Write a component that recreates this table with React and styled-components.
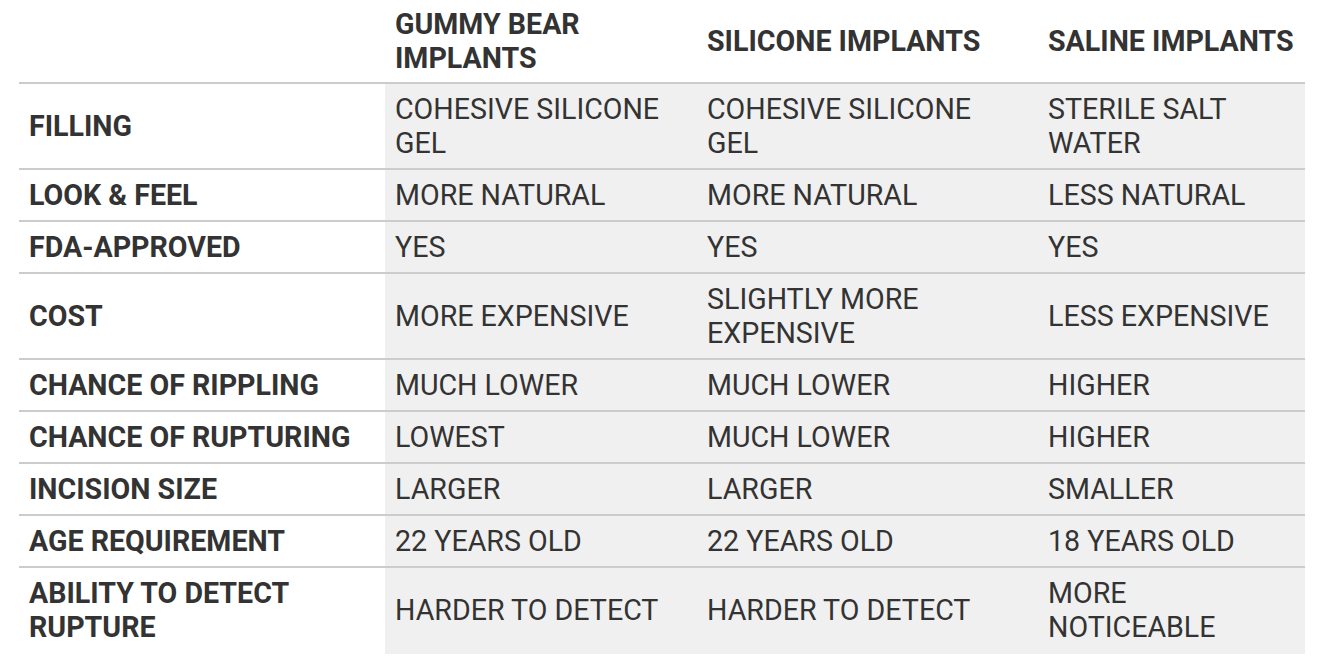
import React from "react"
import styled, { createGlobalStyle } from "styled-components"

const GlobalStyle = createGlobalStyle`
  html, body {
    margin: 0;
    padding: 0;
    background: #ffffff;
  }
  body {
    font-family: Roboto, "Liberation Sans", Arial, sans-serif;
    color: #333333;
  }
`

const Wrapper = styled.div`
  padding: 0 20px 0 19px;
`

const Table = styled.div`
  display: grid;
  grid-template-columns: 366px 312px 341px 267px;
  width: 1286px;
`

const Cell = styled.div`
  display: flex;
  align-items: center;
  padding: 8px 18px 8px 10px;
  font-size: 28.6px;
  line-height: 34px;
  text-transform: uppercase;
  border-bottom: 2px solid #cccccc;
  background: ${props => (props.$shaded ? "#f0f0f0" : "transparent")};
  font-weight: ${props => (props.$bold ? 700 : 400)};
  ${props => props.$last && "border-bottom-color: transparent;"}
`

const HeadCell = styled(Cell)`
  padding: 7px 8px 7px 10px;
  font-weight: 700;
  background: transparent;
`

const columns = ["", "Gummy Bear Implants", "Silicone Implants", "Saline Implants"]

const rows = [
  ["Filling", "Cohesive silicone gel", "Cohesive silicone gel", "Sterile salt water"],
  ["Look & Feel", "More natural", "More natural", "Less natural"],
  ["FDA-Approved", "Yes", "Yes", "Yes"],
  ["Cost", "More expensive", "Slightly more expensive", "Less expensive"],
  ["Chance of rippling", "Much lower", "Much lower", "Higher"],
  ["Chance of rupturing", "Lowest", "Much lower", "Higher"],
  ["Incision size", "Larger", "Larger", "Smaller"],
  ["Age requirement", "22 years old", "22 years old", "18 years old"],
  ["Ability to detect rupture", "Harder to detect", "Harder to detect", "More noticeable"],
]

export default function App() {
  return (
    <Wrapper>
      <GlobalStyle />
      <Table>
        {columns.map((col, i) => (
          <HeadCell key={"h" + i}>{col}</HeadCell>
        ))}
        {rows.map((row, r) =>
          row.map((text, c) => (
            <Cell
              key={r + "-" + c}
              $bold={c === 0}
              $shaded={c > 0}
              $last={r === rows.length - 1}
            >
              {text}
            </Cell>
          ))
        )}
      </Table>
    </Wrapper>
  )
}
